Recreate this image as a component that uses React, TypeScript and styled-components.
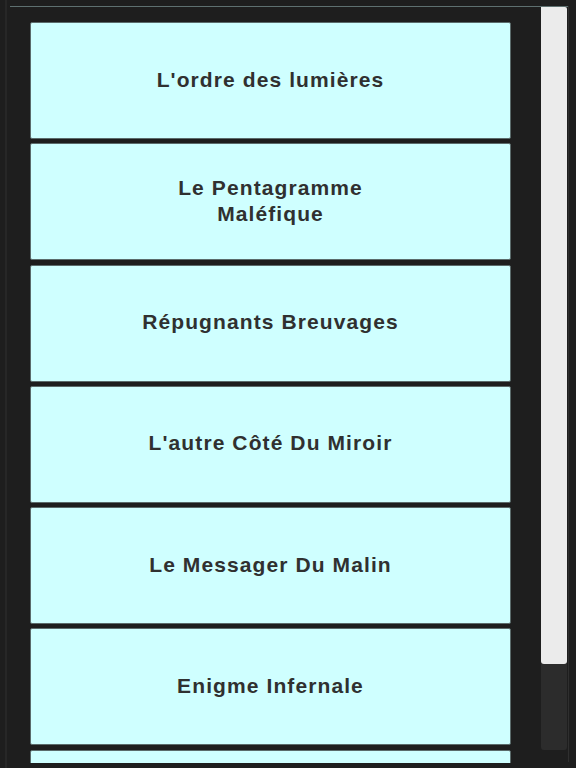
import styled, { createGlobalStyle } from "styled-components";

const GlobalStyle = createGlobalStyle`
    html, body {
        margin: 0;
        padding: 0;
        background-color: #1e1e1e;
        overflow: hidden;
    }
`;

const Frame = styled.div`
    height: 768px;
    box-sizing: border-box;
    margin-left: 5px;
    padding: 6px 0 0 3px;
    border-left: 2px solid #272727;
    display: flex;
    align-items: flex-start;
`;

const Panel = styled.div`
    width: 558px;
    border-top: 1px solid #5e7070;
    display: flex;
    align-items: flex-start;
`;

const ListViewport = styled.div`
    flex: 1;
    height: 756px;
    overflow: hidden;
`;

const CardList = styled.ul`
    list-style: none;
    margin: 0;
    padding: 15px 30px 0 20px;
    display: flex;
    flex-direction: column;
    gap: 4.3px;
`;

const Card = styled.li`
    box-sizing: border-box;
    height: 117px;
    flex-shrink: 0;
    background-color: #cfffff;
    border: 1px solid #5b6b6b;
    border-radius: 2px;
    display: flex;
    align-items: center;
    justify-content: center;
`;

const CardTitle = styled.span`
    max-width: 280px;
    margin-top: -2px;
    text-align: center;
    font-family: "Liberation Sans", Arial, sans-serif;
    font-weight: 700;
    font-size: 21px;
    letter-spacing: 1.1px;
    line-height: 26px;
    color: #303030;
`;

const Scrollbar = styled.div`
    width: 26px;
    height: 743px;
    margin-right: 1px;
    display: flex;
    flex-direction: column;
    background-color: #2c2c2c;
    border-radius: 0 0 3px 3px;
`;

const Thumb = styled.div`
    height: 657px;
    background-color: #ebebeb;
    border-radius: 0 2px 3px 3px;
`;

const Edge = styled.div`
    width: 1px;
    height: 756px;
    background-color: #2f2f2f;
`;

const titles = [
    "L'ordre des lumières",
    "Le Pentagramme Maléfique",
    "Répugnants Breuvages",
    "L'autre Côté Du Miroir",
    "Le Messager Du Malin",
    "Enigme Infernale",
    "",
];

const App: React.FC = () => {
    return (
        <>
            <GlobalStyle />
            <Frame>
                <Panel>
                    <ListViewport>
                        <CardList>
                            {titles.map((title, i) => (
                                <Card key={i}>
                                    <CardTitle>{title}</CardTitle>
                                </Card>
                            ))}
                        </CardList>
                    </ListViewport>
                    <Scrollbar>
                        <Thumb />
                    </Scrollbar>
                </Panel>
                <Edge />
            </Frame>
        </>
    );
};

export default App;
